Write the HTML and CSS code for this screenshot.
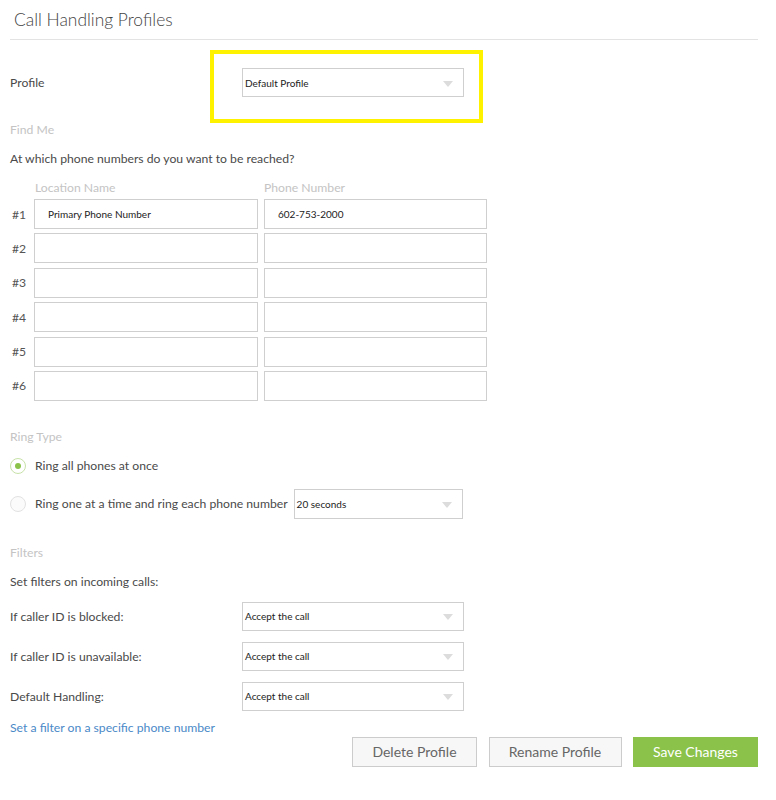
FILE: index.html
```html
<!DOCTYPE html>
<html>
<head>
<meta charset="utf-8">
<link rel="stylesheet" href="styles.css">
</head>
<body>
<div class="page">
  <div class="header">Call Handling Profiles</div>

  <div class="profile-row">
    <div class="label-col">Profile</div>
    <div class="select sel-profile"><span>Default Profile</span><i class="arrow"></i></div>
    <div class="highlight"></div>
  </div>

  <div class="section-title st-findme">Find Me</div>
  <div class="text q-text">At which phone numbers do you want to be reached?</div>

  <div class="fm-head">
    <div class="fm-num"></div>
    <div class="fm-loc">Location Name</div>
    <div class="fm-phone">Phone Number</div>
  </div>
  <div class="fm-rows">
    <div class="fm-row"><div class="fm-num">#1</div><div class="input in-loc">Primary Phone Number</div><div class="input in-phone">602-753-2000</div></div>
    <div class="fm-row"><div class="fm-num">#2</div><div class="input in-loc"></div><div class="input in-phone"></div></div>
    <div class="fm-row"><div class="fm-num">#3</div><div class="input in-loc"></div><div class="input in-phone"></div></div>
    <div class="fm-row"><div class="fm-num">#4</div><div class="input in-loc"></div><div class="input in-phone"></div></div>
    <div class="fm-row"><div class="fm-num">#5</div><div class="input in-loc"></div><div class="input in-phone"></div></div>
    <div class="fm-row"><div class="fm-num">#6</div><div class="input in-loc"></div><div class="input in-phone"></div></div>
  </div>

  <div class="section-title st-ring">Ring Type</div>
  <div class="radio-row rr-1"><span class="radio checked"></span><span class="text">Ring all phones at once</span></div>
  <div class="radio-row rr-2"><span class="radio"></span><span class="text">Ring one at a time and ring each phone number</span>
    <div class="select sel-secs"><span>20 seconds</span><i class="arrow"></i></div>
  </div>

  <div class="section-title st-filters">Filters</div>
  <div class="text q-text">Set filters on incoming calls:</div>

  <div class="filter-rows">
    <div class="filter-row"><div class="label-col">If caller ID is blocked:</div><div class="select sel-filter"><span>Accept the call</span><i class="arrow"></i></div></div>
    <div class="filter-row"><div class="label-col">If caller ID is unavailable:</div><div class="select sel-filter"><span>Accept the call</span><i class="arrow"></i></div></div>
    <div class="filter-row"><div class="label-col">Default Handling:</div><div class="select sel-filter"><span>Accept the call</span><i class="arrow"></i></div></div>
  </div>

  <a class="link" href="#">Set a filter on a specific phone number</a>

  <div class="buttons">
    <button class="btn btn-delete">Delete Profile</button>
    <button class="btn btn-rename">Rename Profile</button>
    <button class="btn btn-save">Save Changes</button>
  </div>
</div>
</body>
</html>
```

FILE: styles.css
```css
* { box-sizing: border-box; }
html, body { margin: 0; padding: 0; background: #fff; }
body {
  font-family: Lato, "Open Sans", Arial, sans-serif;
  color: #4a4a4a;
  font-size: 12.2px;
}
.page {
  position: relative;
  width: 748px;
  margin-left: 10px;
  display: flex;
  flex-direction: column;
}
.header {
  height: 40px;
  line-height: 40px;
  padding-left: 4px;
  font-size: 17.4px;
  font-weight: 300;
  color: #444;
  border-bottom: 1px solid #e3e3e3;
}
.profile-row {
  display: flex;
  align-items: center;
  margin-top: 28px;
  height: 29px;
}
.label-col {
  width: 232px;
  flex: none;
  color: #4a4a4a;
}
.highlight {
  position: absolute;
  left: 200px;
  top: 50px;
  width: 273px;
  height: 73px;
  border: 4px solid #fff200;
  pointer-events: none;
}
.select {
  position: relative;
  border: 1px solid #cfcfcf;
  background: #fff;
  display: flex;
  align-items: center;
  padding-left: 2px;
  font-size: 10px;
  color: #222;
}
.select .arrow {
  position: absolute;
  right: 10px;
  top: 50%;
  margin-top: -2px;
  width: 0;
  height: 0;
  border-left: 5px solid transparent;
  border-right: 5px solid transparent;
  border-top: 6px solid #dcdcdc;
}
.sel-profile { width: 222px; height: 29px; }
.sel-secs { width: 169px; height: 30px; margin-left: 6px; }
.sel-filter { width: 222px; height: 29px; }

.section-title {
  color: #c4c4c4;
  line-height: 16px;
}
.text { line-height: 16px; color: #4a4a4a; }
.st-findme { margin-top: 25px; }
.q-text { margin-top: 13px; }

.fm-head {
  display: flex;
  margin-top: 13px;
  line-height: 16px;
  color: #c4c4c4;
}
.fm-num { width: 24px; flex: none; padding-left: 2px; color: #555; }
.fm-loc { width: 230px; padding-left: 1px; }
.fm-phone { width: 223px; }
.fm-rows {
  display: flex;
  flex-direction: column;
  gap: 4.4px;
  margin-top: 3px;
}
.fm-row { display: flex; align-items: center; }
.input {
  height: 30px;
  border: 1px solid #cfcfcf;
  background: #fff;
  font-size: 10px;
  color: #222;
  display: flex;
  align-items: center;
  padding-left: 13px;
}
.in-loc { width: 224px; }
.in-phone { width: 223px; margin-left: 6px; }

.st-ring { margin-top: 28px; }
.radio-row {
  display: flex;
  align-items: center;
}
.rr-1 { margin-top: 11px; height: 20px; }
.rr-2 { margin-top: 13px; height: 30px; }
.radio {
  width: 16px;
  height: 16px;
  border-radius: 50%;
  border: 1px solid #e2e2e2;
  background: #fbfbfb;
  margin-right: 9px;
  flex: none;
  position: relative;
}
.radio.checked {
  border-color: #c7e2a8;
  background: #fff;
}
.radio.checked::after {
  content: "";
  position: absolute;
  left: 4px;
  top: 4px;
  width: 6px;
  height: 6px;
  border-radius: 50%;
  background: #8bc34a;
}

.st-filters { margin-top: 26px; }
.filter-rows {
  display: flex;
  flex-direction: column;
  gap: 11px;
  margin-top: 12px;
}
.filter-row { display: flex; align-items: center; }

.link {
  margin-top: 9px;
  line-height: 16px;
  color: #4a89c8;
  text-decoration: none;
  align-self: flex-start;
}
.buttons {
  display: flex;
  justify-content: flex-end;
  gap: 11.5px;
  margin-top: 1px;
}
.btn {
  height: 30px;
  font-family: Lato, "Open Sans", Arial, sans-serif;
  font-size: 14px;
  color: #666;
  background: #f7f7f7;
  border: 1px solid #cccccc;
  padding: 0;
}
.btn-delete { width: 125px; }
.btn-rename { width: 133px; }
.btn-save {
  width: 125px;
  background: #8bc34a;
  border-color: #8bc34a;
  color: #fff;
}
```
